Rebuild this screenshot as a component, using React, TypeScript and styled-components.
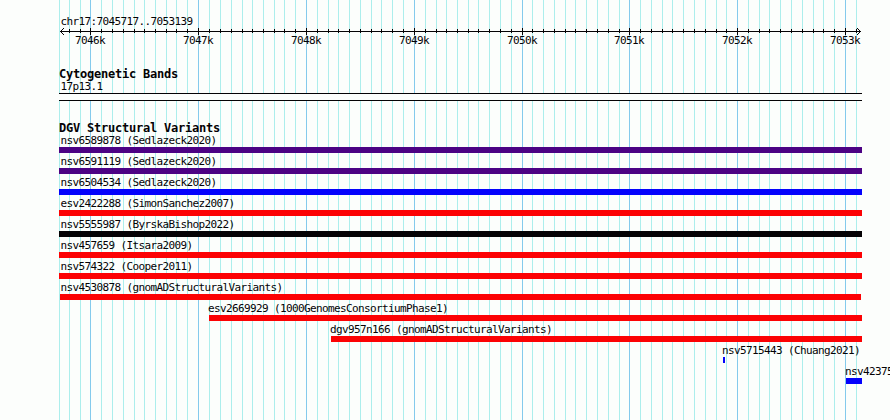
import React from 'react';
import styled, { createGlobalStyle } from 'styled-components';

const colors = {
  paper: '#fcfefc',
  ink: '#040204',
  minor: '#aceeec',
  major: '#84caec',
  red: '#fc0204',
  blue: '#0402fc',
  indigo: '#4c0284',
};

const PANEL_LEFT = 59;
const PANEL_RIGHT = 862;

const majorTicks = [90, 198, 306, 414, 522, 629, 737, 845];

const minorTicks = [
  69, 80, 101, 112, 123, 134, 144, 155, 166, 176, 187, 209, 220, 231, 242, 252,
  263, 274, 284, 295, 317, 328, 338, 349, 360, 371, 381, 392, 403, 425, 436,
  446, 457, 468, 478, 489, 500, 511, 532, 543, 554, 565, 575, 586, 597, 608,
  619, 640, 651, 662, 672, 683, 694, 705, 716, 726, 748, 759, 769, 780, 791,
  802, 813, 823, 834, 856,
];

type Variant = {
  label: string;
  color: string;
  start: number;
  end: number;
  labelStart?: number;
};

const variants: Variant[] = [
  { label: 'nsv6589878 (Sedlazeck2020)', color: colors.indigo, start: 59, end: 862 },
  { label: 'nsv6591119 (Sedlazeck2020)', color: colors.indigo, start: 59, end: 862 },
  { label: 'nsv6504534 (Sedlazeck2020)', color: colors.blue, start: 59, end: 862 },
  { label: 'esv2422288 (SimonSanchez2007)', color: colors.red, start: 59, end: 862 },
  { label: 'nsv5555987 (ByrskaBishop2022)', color: colors.ink, start: 59, end: 862 },
  { label: 'nsv457659 (Itsara2009)', color: colors.red, start: 59, end: 862 },
  { label: 'nsv574322 (Cooper2011)', color: colors.red, start: 59, end: 862 },
  { label: 'nsv4530878 (gnomADStructuralVariants)', color: colors.red, start: 60, end: 861 },
  { label: 'esv2669929 (1000GenomesConsortiumPhase1)', color: colors.red, start: 209, end: 862, labelStart: 208 },
  { label: 'dgv957n166 (gnomADStructuralVariants)', color: colors.red, start: 331, end: 862, labelStart: 330 },
  { label: 'nsv5715443 (Chuang2021)', color: colors.blue, start: 723, end: 725, labelStart: 722 },
  { label: 'nsv42375', color: colors.blue, start: 846, end: 862, labelStart: 845 },
];

const GlobalStyle = createGlobalStyle`
  body {
    margin: 0;
    background: ${colors.paper};
    overflow: hidden;
  }
`;

const Browser = styled.main`
  position: relative;
  box-sizing: border-box;
  width: 890px;
  height: 420px;
  overflow: hidden;
  background: ${colors.paper};
  color: ${colors.ink};
  font-family: 'DejaVu Sans Mono', monospace;
  font-size: 11px;
  letter-spacing: -0.622px;
  white-space: pre;
`;

const GridLines = styled.svg`
  position: absolute;
  inset: 0;
`;

const Tracks = styled.div`
  position: relative;
  display: flex;
  flex-direction: column;
  padding-top: 14px;
`;

const Region = styled.div`
  height: 14px;
  line-height: 16px;
  padding-left: 60.5px;
`;

const Axis = styled.svg`
  display: block;
  height: 7px;
`;

const TickLabels = styled.div`
  display: flex;
  height: 12px;
  line-height: 12px;
  padding-left: 75px;
  margin-bottom: 20px;
`;

const TickLabel = styled.span`
  flex: none;
`;

const TrackTitle = styled.h2`
  margin: 0;
  height: 14px;
  line-height: 14px;
  padding-left: ${PANEL_LEFT}px;
  font-size: 12px;
  font-weight: bold;
  letter-spacing: -0.224px;
`;

const BandName = styled.div`
  height: 12px;
  line-height: 12px;
  padding-left: 60.5px;
`;

const Band = styled.div`
  box-sizing: border-box;
  height: 8px;
  width: ${PANEL_RIGHT - PANEL_LEFT}px;
  margin: 0 0 20px ${PANEL_LEFT}px;
  border: solid ${colors.ink};
  border-width: 1px 0;
  background: ${colors.paper};
`;

const VariantList = styled.div`
  margin-top: -3px;
`;

const Row = styled.div`
  height: 21px;
`;

const RowLabel = styled.div<{ $start: number }>`
  height: 15px;
  line-height: 18px;
  padding-left: ${({ $start }) => $start}px;
`;

const Bar = styled.div<{ $start: number; $end: number; $color: string }>`
  height: 6px;
  width: ${({ $start, $end }) => $end - $start}px;
  margin-left: ${({ $start }) => $start}px;
  background: ${({ $color }) => $color};
`;

function Grid() {
  return (
    <GridLines width="890" height="420" shapeRendering="crispEdges">
      {[PANEL_LEFT, ...minorTicks].map((x) => (
        <rect key={x} x={x} y="0" width="1" height="420" fill={colors.minor} />
      ))}
      {majorTicks.map((x) => (
        <rect key={x} x={x} y="0" width="1" height="420" fill={colors.major} />
      ))}
    </GridLines>
  );
}

function Ruler() {
  return (
    <Axis width="890" height="7" fill={colors.ink} shapeRendering="crispEdges">
      <rect x="60" y="3" width="801" height="1" />
      {minorTicks.map((x) => (
        <rect key={x} x={x} y="1" width="1" height="4" />
      ))}
      {majorTicks.map((x) => (
        <rect key={x} x={x} y="0" width="1" height="7" />
      ))}
      {[1, 2, 3].map((d) => (
        <React.Fragment key={d}>
          <rect x={60 + d} y={3 - d} width="1" height="1" />
          <rect x={60 + d} y={3 + d} width="1" height="1" />
          <rect x={860 - d} y={3 - d} width="1" height="1" />
          <rect x={860 - d} y={3 + d} width="1" height="1" />
        </React.Fragment>
      ))}
    </Axis>
  );
}

export default function App() {
  return (
    <>
      <GlobalStyle />
      <Browser>
        <Grid />
        <Tracks>
          <Region>chr17:7045717..7053139</Region>
          <Ruler />
          <TickLabels>
            {majorTicks.map((x, i) => (
              <TickLabel key={x} style={{ width: (majorTicks[i + 1] ?? x + 40) - x }}>
                {`${7046 + i}k`}
              </TickLabel>
            ))}
          </TickLabels>
          <TrackTitle>Cytogenetic Bands</TrackTitle>
          <BandName>17p13.1</BandName>
          <Band />
          <TrackTitle>DGV Structural Variants</TrackTitle>
          <VariantList>
            {variants.map(({ label, color, start, end, labelStart = 60.5 }) => (
              <Row key={label}>
                <RowLabel $start={labelStart}>{label}</RowLabel>
                <Bar $start={start} $end={end} $color={color} />
              </Row>
            ))}
          </VariantList>
        </Tracks>
      </Browser>
    </>
  );
}
